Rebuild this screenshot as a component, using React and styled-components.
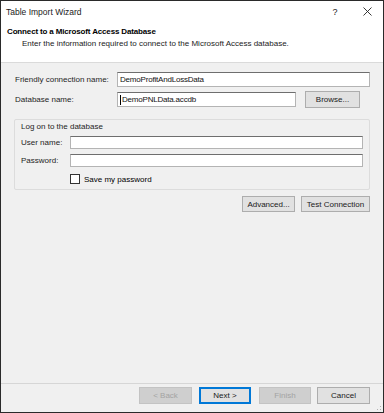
import React from "react";
import styled, { createGlobalStyle } from "styled-components";

const GlobalStyle = createGlobalStyle`
  html, body {
    margin: 0;
    padding: 0;
    background: #ffffff;
  }
  body {
    font-family: "Liberation Sans", Arial, sans-serif;
    font-size: 8px;
    color: #000;
  }
`;

const Window = styled.div`
  width: 384px;
  height: 413px;
  box-sizing: border-box;
  border: 1px solid #2a2a2a;
  display: flex;
  flex-direction: column;
  background: #f0f0f0;
`;

const TitleBar = styled.div`
  height: 21px;
  background: #fff;
  display: flex;
  align-items: center;
  padding-left: 5px;
  font-size: 8.5px;
  color: #1a1a1a;
`;

const TitleText = styled.div`
  flex: 1;
`;

const TitleIcon = styled.div`
  width: 32px;
  height: 21px;
  display: flex;
  align-items: center;
  justify-content: center;
  font-size: 9px;
  color: #222;
`;

const Header = styled.div`
  background: #fff;
  height: 41px;
  padding: 4px 0 0 6px;
  box-sizing: border-box;
  border-bottom: 1px solid #dadada;
`;

const HeaderTitle = styled.div`
  font-weight: bold;
  font-size: 8px;
  line-height: 12px;
  letter-spacing: -0.15px;
`;

const HeaderSub = styled.div`
  font-size: 8px;
  line-height: 12px;
  padding-left: 15px;
  color: #222;
`;

const Body = styled.div`
  flex: 1;
  padding: 9px 13px 0 14px;
  display: flex;
  flex-direction: column;
`;

const Row = styled.div`
  display: flex;
  align-items: center;
  height: ${(p) => p.h || 15}px;
  margin-bottom: ${(p) => p.mb || 0}px;
`;

const Label = styled.div`
  width: ${(p) => p.w}px;
  flex-shrink: 0;
  color: #1e1e1e;
`;

const Input = styled.div`
  height: ${(p) => p.h || 15}px;
  box-sizing: border-box;
  width: ${(p) => (p.w ? `${p.w}px` : "auto")};
  flex: ${(p) => (p.w ? "none" : 1)};
  background: #fff;
  border: 1px solid #b4b4b4;
  border-top-color: #6e6e6e;
  display: flex;
  align-items: center;
  padding-left: 2px;
  color: #111;
  letter-spacing: -0.2px;
`;

const Caret = styled.span`
  display: inline-block;
  width: 1px;
  height: 10px;
  background: #000;
  margin-right: 1px;
`;

const Button = styled.div`
  width: ${(p) => p.w}px;
  height: ${(p) => p.h || 17}px;
  box-sizing: border-box;
  background: ${(p) => (p.disabled ? "#cfcfcf" : "#e1e1e1")};
  border: 1px solid ${(p) => (p.primary ? "#0078d7" : p.disabled ? "#c3c3c3" : "#adadad")};
  box-shadow: ${(p) => (p.primary ? "inset 0 0 0 1px #0078d7" : "none")};
  color: ${(p) => (p.disabled ? "#a3a3a3" : "#1a1a1a")};
  display: flex;
  align-items: center;
  justify-content: center;
  margin-left: ${(p) => p.ml || 0}px;
`;

const Group = styled.div`
  margin: 11px 0 0 -1px;
  height: 71px;
  box-sizing: border-box;
  border: 1px solid #dcdcdc;
  border-radius: 2px;
  padding: 2px 6px 0 6px;
  display: flex;
  flex-direction: column;
`;

const GroupLabel = styled.div`
  line-height: 10px;
  margin-bottom: 4px;
  color: #1e1e1e;
`;

const CheckRow = styled.div`
  display: flex;
  align-items: center;
  padding-left: 49px;
  height: 12px;
`;

const CheckBox = styled.div`
  width: 10px;
  height: 10px;
  box-sizing: border-box;
  border: 1px solid #333;
  background: #fff;
  margin-right: 4px;
`;

const ButtonRow = styled.div`
  display: flex;
  justify-content: flex-end;
  margin-top: 6px;
`;

const Footer = styled.div`
  height: 29px;
  border-top: 1px solid #d6d6d6;
  display: flex;
  align-items: flex-start;
  justify-content: flex-end;
  padding: 3px 13px 0 0;
  box-sizing: border-box;
  position: relative;
`;

const Grip = styled.svg`
  position: absolute;
  right: 1px;
  bottom: 1px;
`;

export default function App() {
  return (
    <>
      <GlobalStyle />
      <Window>
        <TitleBar>
          <TitleText>Table Import Wizard</TitleText>
          <TitleIcon>?</TitleIcon>
          <TitleIcon>
            <svg width="9" height="9" viewBox="0 0 9 9">
              <path d="M0.5 0.5 L8.5 8.5 M8.5 0.5 L0.5 8.5" stroke="#222" strokeWidth="0.9" />
            </svg>
          </TitleIcon>
        </TitleBar>
        <Header>
          <HeaderTitle>Connect to a Microsoft Access Database</HeaderTitle>
          <HeaderSub>
            Enter the information required to connect to the Microsoft Access database.
          </HeaderSub>
        </Header>
        <Body>
          <Row mb={4}>
            <Label w={102}>Friendly connection name:</Label>
            <Input>DemoProfitAndLossData</Input>
          </Row>
          <Row h={17}>
            <Label w={102}>Database name:</Label>
            <Input w={179}>
              <Caret />
              DemoPNLData.accdb
            </Input>
            <Button w={55} ml={9}>Browse...</Button>
          </Row>
          <Group>
            <GroupLabel>Log on to the database</GroupLabel>
            <Row h={13} mb={5}>
              <Label w={49}>User name:</Label>
              <Input h={13} />
            </Row>
            <Row h={13} mb={6}>
              <Label w={49}>Password:</Label>
              <Input h={13} />
            </Row>
            <CheckRow>
              <CheckBox />
              Save my password
            </CheckRow>
          </Group>
          <ButtonRow>
            <Button w={53} h={16}>Advanced...</Button>
            <Button w={69} h={16} ml={6}>Test Connection</Button>
          </ButtonRow>
        </Body>
        <Footer>
          <Button w={53} disabled>&lt; Back</Button>
          <Button w={52} ml={7} primary>Next &gt;</Button>
          <Button w={52} ml={8} disabled>Finish</Button>
          <Button w={53} ml={6}>Cancel</Button>
          <Grip width="8" height="8" viewBox="0 0 8 8">
            <rect x="6" y="6" width="1" height="1" fill="#b0b0b0" />
            <rect x="3" y="6" width="1" height="1" fill="#b0b0b0" />
            <rect x="6" y="3" width="1" height="1" fill="#b0b0b0" />
          </Grip>
        </Footer>
      </Window>
    </>
  );
}
